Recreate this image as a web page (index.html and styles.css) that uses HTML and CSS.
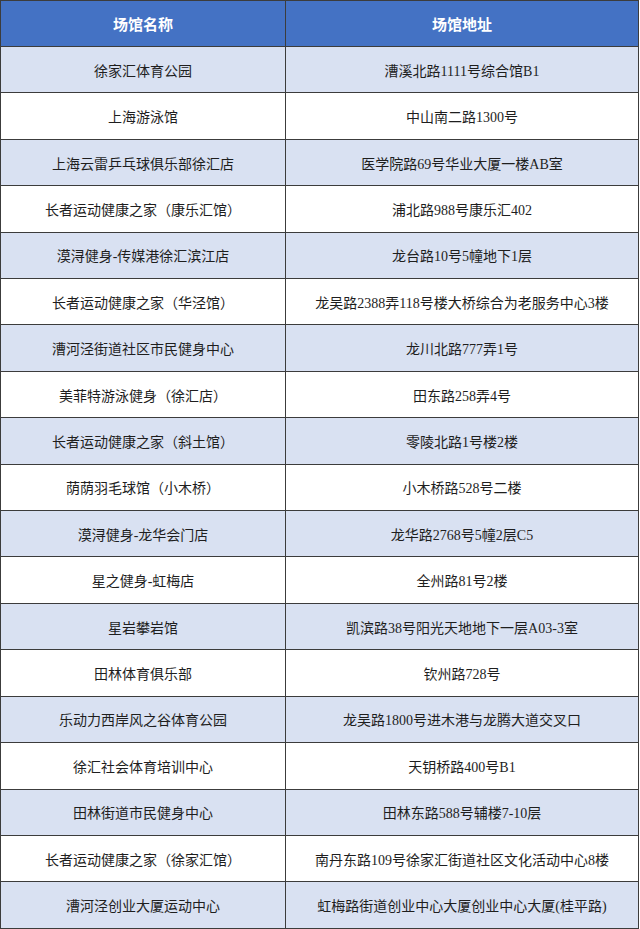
FILE: index.html
```html
<!DOCTYPE html>
<html lang="zh-CN">
<head>
<meta charset="utf-8">
<title>场馆</title>
<link rel="stylesheet" href="styles.css">
</head>
<body>
<table class="venues">
  <thead>
    <tr><th class="c1">场馆名称</th><th class="c2">场馆地址</th></tr>
  </thead>
  <tbody>
    <tr class="alt"><td>徐家汇体育公园</td><td>漕溪北路1111号综合馆B1</td></tr>
    <tr><td>上海游泳馆</td><td>中山南二路1300号</td></tr>
    <tr class="alt"><td>上海云雷乒乓球俱乐部徐汇店</td><td>医学院路69号华业大厦一楼AB室</td></tr>
    <tr><td>长者运动健康之家（康乐汇馆）</td><td>浦北路988号康乐汇402</td></tr>
    <tr class="alt"><td>漠浔健身-传媒港徐汇滨江店</td><td>龙台路10号5幢地下1层</td></tr>
    <tr><td>长者运动健康之家（华泾馆）</td><td>龙吴路2388弄118号楼大桥综合为老服务中心3楼</td></tr>
    <tr class="alt"><td>漕河泾街道社区市民健身中心</td><td>龙川北路777弄1号</td></tr>
    <tr><td>美菲特游泳健身（徐汇店）</td><td>田东路258弄4号</td></tr>
    <tr class="alt"><td>长者运动健康之家（斜土馆）</td><td>零陵北路1号楼2楼</td></tr>
    <tr><td>荫荫羽毛球馆（小木桥）</td><td>小木桥路528号二楼</td></tr>
    <tr class="alt"><td>漠浔健身-龙华会门店</td><td>龙华路2768号5幢2层C5</td></tr>
    <tr><td>星之健身-虹梅店</td><td>全州路81号2楼</td></tr>
    <tr class="alt"><td>星岩攀岩馆</td><td>凯滨路38号阳光天地地下一层A03-3室</td></tr>
    <tr><td>田林体育俱乐部</td><td>钦州路728号</td></tr>
    <tr class="alt"><td>乐动力西岸风之谷体育公园</td><td>龙吴路1800号进木港与龙腾大道交叉口</td></tr>
    <tr><td>徐汇社会体育培训中心</td><td>天钥桥路400号B1</td></tr>
    <tr class="alt"><td>田林街道市民健身中心</td><td>田林东路588号辅楼7-10层</td></tr>
    <tr><td>长者运动健康之家（徐家汇馆）</td><td>南丹东路109号徐家汇街道社区文化活动中心8楼</td></tr>
    <tr class="alt"><td>漕河泾创业大厦运动中心</td><td>虹梅路街道创业中心大厦创业中心大厦(桂平路)</td></tr>
  </tbody>
</table>
</body>
</html>
```

FILE: styles.css
```css
html, body {
  margin: 0;
  padding: 0;
  background: #ffffff;
}

.venues {
  width: 639px;
  height: 929px;
  border-collapse: collapse;
  table-layout: fixed;
  font-family: "Noto Sans CJK SC", "Noto Sans", sans-serif;
  color: #1e1e1e;
}

.venues th,
.venues td {
  border: 1px solid #3c3c3c;
  text-align: center;
  vertical-align: middle;
  padding: 0 4px;
  white-space: nowrap;
}

.venues th {
  background: #4472c4;
  color: #ffffff;
  font-size: 15px;
  font-weight: 700;
  height: 45px;
}

.venues .c1 {
  width: 276px;
}

.venues td {
  font-family: "Liberation Serif", "Noto Sans CJK SC", serif;
  font-size: 14px;
  height: 45px;
}

.venues tr.alt td {
  background: #d9e1f2;
}
```
